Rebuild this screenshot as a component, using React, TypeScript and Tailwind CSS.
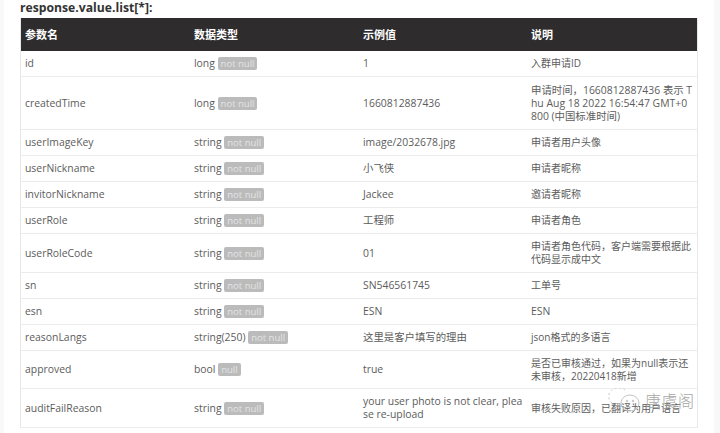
const rows = [
  { name: "id", type: "long", tag: "not null", example: "1", desc: "入群申请ID", h: "h-[26px]" },
  {
    name: "createdTime",
    type: "long",
    tag: "not null",
    example: "1660812887436",
    desc: "申请时间，1660812887436 表示 T\nhu Aug 18 2022 16:54:47 GMT+0\n800 (中国标准时间)",
    h: "h-[53px]",
    latin: true,
  },
  { name: "userImageKey", type: "string", tag: "not null", example: "image/2032678.jpg", desc: "申请者用户头像", h: "h-[26px]" },
  { name: "userNickname", type: "string", tag: "not null", example: "小飞侠", desc: "申请者昵称", h: "h-[26px]" },
  { name: "invitorNickname", type: "string", tag: "not null", example: "Jackee", desc: "邀请者昵称", h: "h-[26px]" },
  { name: "userRole", type: "string", tag: "not null", example: "工程师", desc: "申请者角色", h: "h-[26px]" },
  {
    name: "userRoleCode",
    type: "string",
    tag: "not null",
    example: "01",
    desc: "申请者角色代码，客户端需要根据此\n代码显示成中文",
    h: "h-[39px]",
  },
  { name: "sn", type: "string", tag: "not null", example: "SN546561745", desc: "工单号", h: "h-[26px]" },
  { name: "esn", type: "string", tag: "not null", example: "ESN", desc: "ESN", h: "h-[26px]", latin: true },
  { name: "reasonLangs", type: "string(250)", tag: "not null", example: "这里是客户填写的理由", desc: "json格式的多语言", h: "h-[26px]" },
  {
    name: "approved",
    type: "bool",
    tag: "null",
    example: "true",
    desc: "是否已审核通过，如果为null表示还\n未审核，20220418新增",
    h: "h-[38px]",
  },
  {
    name: "auditFailReason",
    type: "string",
    tag: "not null",
    example: "your user photo is not clear, plea\nse re-upload",
    desc: "审核失败原因，已翻译为用户语言",
    h: "h-[39px]",
  },
];

const headers = ["参数名", "数据类型", "示例值", "说明"];

const App = () => {
  return (
    <div className="w-[720px] h-[433px] overflow-hidden bg-white text-[#5c5c5c] text-[10.4px] leading-[13px] font-['Open_Sans','Noto_Sans_CJK_SC',sans-serif] relative">
      <div className="flex h-full">
        <div className="w-[4px] bg-[#f8f8f8]" />
        <div className="flex-1 pl-[16px]">
          <div className="h-[18px] text-[12.2px] leading-[15px] font-bold text-[#333]">
            response.value.list[*]:
          </div>
          <table className="w-[677px] table-fixed border-separate border-spacing-0 border-l border-r border-[#e8e8e8]">
            <thead>
              <tr className="h-[33px] bg-[#2e2c2d] text-white text-[11px] font-bold text-left">
                {headers.map((text) => (
                  <th className="pl-[4px] pr-0 w-[169px] last:pl-[3px]" key={text}>
                    {text}
                  </th>
                ))}
              </tr>
            </thead>
            <tbody>
              {rows.map((row) => (
                <tr className={row.h} key={row.name}>
                  <td className="pl-[4px] border-b border-[#ececec]">{row.name}</td>
                  <td className="pl-[4px] border-b border-[#ececec]">
                    {row.type}{" "}
                    <span className="rounded-[2px] bg-[#bbb] px-[3px] text-[9.5px] text-[#e4e4e4]">
                      {row.tag}
                    </span>
                  </td>
                  <td className="pl-[4px] border-b border-[#ececec] whitespace-pre">{row.example}</td>
                  <td
                    className={`pl-[3px] border-b border-[#ececec] whitespace-pre ${
                      row.latin ? "" : "text-[10px]"
                    }`}
                  >
                    {row.desc}
                  </td>
                </tr>
              ))}
            </tbody>
          </table>
        </div>
        <div className="w-[6px] bg-[#f8f8f8]" />
      </div>
      <div className="absolute left-[608px] top-[388px] flex items-center gap-[3px] text-[#a8a8a8]">
        <svg width="34" height="26" viewBox="0 0 34 26" fill="none" stroke="#c4c4c4" strokeWidth="1">
          <path d="M4 15a9 8 0 0 1 13-13" strokeDasharray="2 2.5" />
          <ellipse cx="22" cy="15" rx="9" ry="8" />
          <circle cx="19" cy="13" r="0.8" fill="#c4c4c4" />
          <circle cx="25" cy="13" r="0.8" fill="#c4c4c4" />
        </svg>
        <span className="text-[16px] leading-[18px] font-light tracking-[0.5px]">唐虞阁</span>
      </div>
    </div>
  );
};

export default App;
